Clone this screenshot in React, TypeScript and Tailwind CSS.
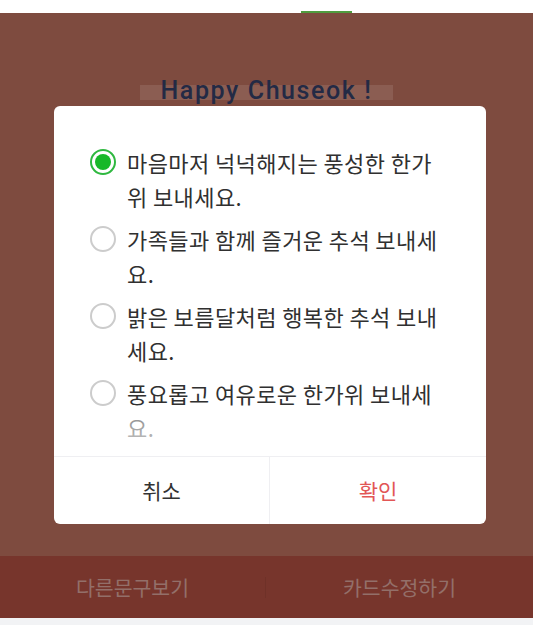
import React from "react";

const options = [
  "마음마저 넉넉해지는 풍성한 한가위 보내세요.",
  "가족들과 함께 즐거운 추석 보내세요.",
  "밝은 보름달처럼 행복한 추석 보내세요.",
  "풍요롭고 여유로운 한가위 보내세요.",
];

function Radio({ checked }: { checked: boolean }) {
  return checked ? (
    <span className="mt-[4px] flex h-[26px] w-[26px] shrink-0 items-center justify-center rounded-full border-2 border-[#2fb840]">
      <span className="h-[16px] w-[16px] rounded-full bg-[#17b828]" />
    </span>
  ) : (
    <span className="mt-[4px] h-[26px] w-[26px] shrink-0 rounded-full border-2 border-[#cccccc]" />
  );
}

export default function App() {
  return (
    <div
      className="flex h-[625px] w-[533px] flex-col overflow-hidden bg-[#f2f3f5]"
      style={{ fontFamily: '"Noto Sans CJK KR", "Noto Sans", sans-serif' }}
    >
      <div className="flex h-[13px] shrink-0 items-end bg-white">
        <div className="ml-[301px] h-[2px] w-[51px] bg-[#4f9d3f]" />
      </div>
      <div className="flex h-[543px] shrink-0 flex-col bg-[#7e4b3f]">
        <div className="mt-[63px] flex h-[30px] justify-center">
          <span className="relative inline-block h-[30px] px-[20px]">
            <span className="absolute bottom-[6px] left-0 right-0 h-[15px] bg-white/10" />
            <span
              className="relative block text-[25px] font-medium leading-[30px] tracking-[1.6px] text-[#232a45]"
              style={{ fontFamily: 'Roboto, "Noto Sans", sans-serif' }}
            >
              Happy Chuseok !
            </span>
          </span>
        </div>
        <div className="ml-[54px] mt-[0px] flex w-[432px] flex-col overflow-hidden rounded-[6px] bg-white">
          <div className="relative h-[350px] overflow-hidden">
            <div className="flex flex-col gap-[9px] pl-[36px] pt-[39px]">
              {options.map((o, i) => (
                <div key={i} className="flex gap-[11px]">
                  <Radio checked={i === 0} />
                  <div className="w-[320px] break-all text-[22px] leading-[34px] tracking-[0.4px] text-[#303030]">
                    {o}
                  </div>
                </div>
              ))}
            </div>
            <div className="absolute bottom-0 left-0 right-0 h-[36px] bg-gradient-to-b from-white/50 to-white/80" />
          </div>
          <div className="flex h-[68px] border-t border-[#efeff2]">
            <div className="flex w-[216px] items-center justify-center border-r border-[#efeff2] text-[21px] text-[#333333]">
              취소
            </div>
            <div className="flex flex-1 items-center justify-center text-[21px] text-[#e25656]">확인</div>
          </div>
        </div>
      </div>
      <div className="flex h-[62px] shrink-0 items-center bg-[#77352c] text-[20.5px] text-[#936f69]">
        <div className="flex w-[265px] justify-center">다른문구보기</div>
        <div className="h-[21px] w-px bg-[#6f3128]" />
        <div className="flex flex-1 justify-center">카드수정하기</div>
      </div>
    </div>
  );
}
